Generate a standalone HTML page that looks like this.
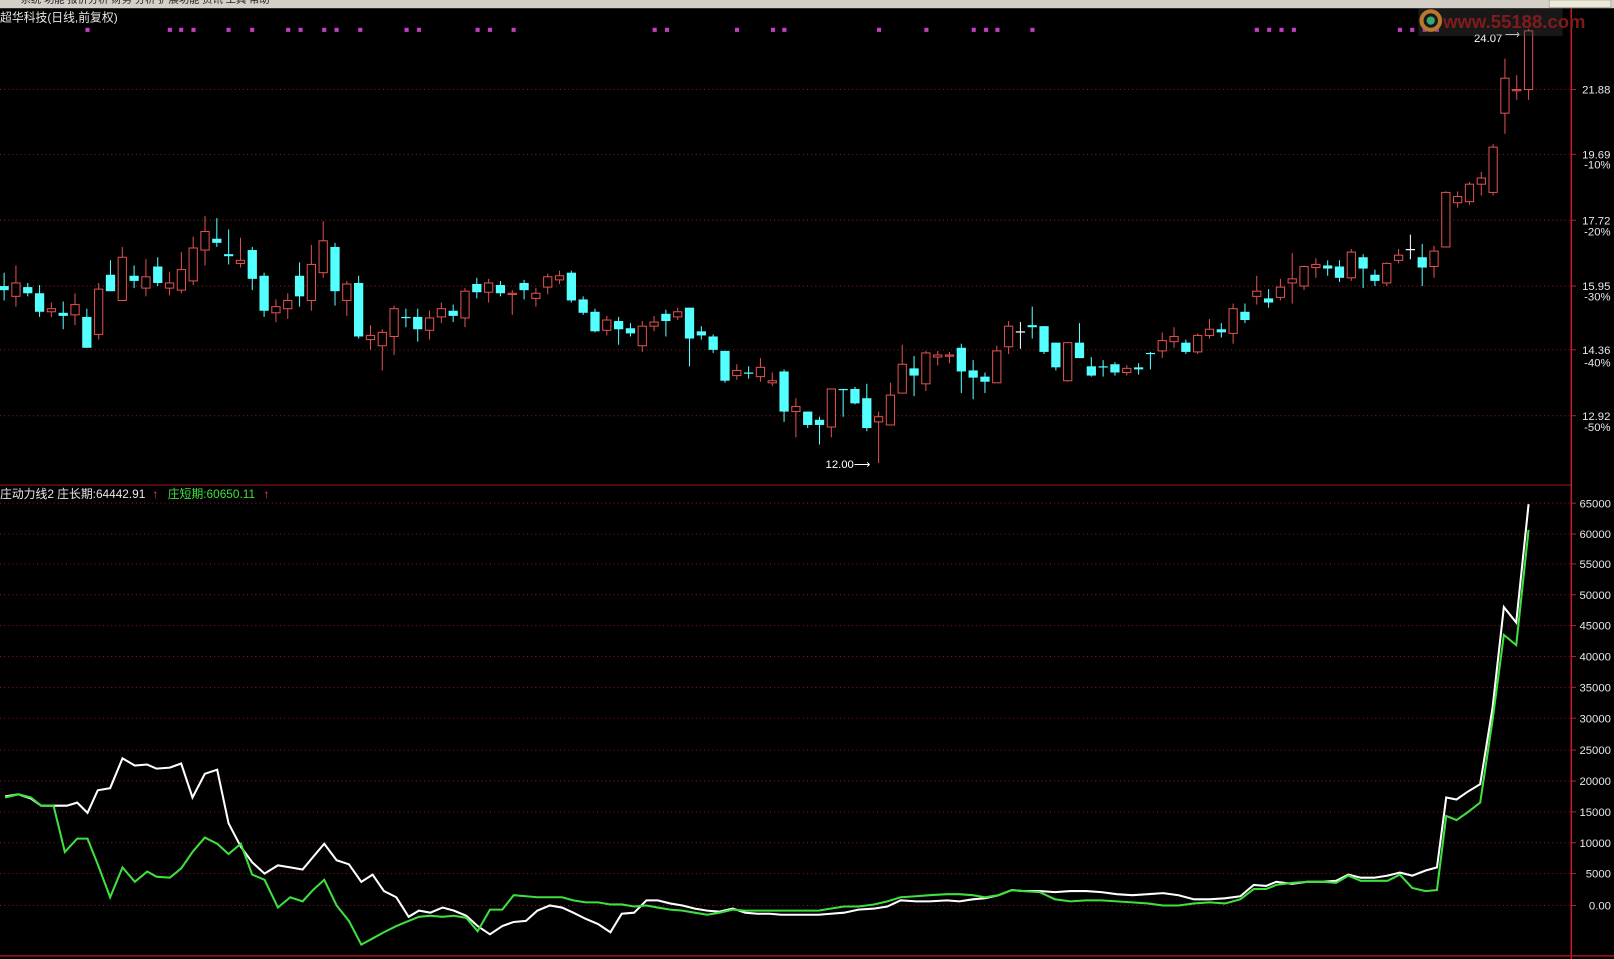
<!DOCTYPE html>
<html><head><meta charset="utf-8"><style>
html,body{margin:0;padding:0;background:#000;overflow:hidden}
svg{display:block}
text{font-family:"Liberation Sans","Noto Sans CJK SC",sans-serif}
</style></head><body>
<svg id="s" width="1614" height="959" viewBox="0 0 1568 932" preserveAspectRatio="none" xmlns="http://www.w3.org/2000/svg">
<rect x="0" y="0" width="1568" height="932" fill="#000"/>
<rect x="0" y="0" width="1568" height="8" fill="#d4d0c8"/>
<text x="20" y="3" font-size="10" fill="#222">系统 功能 报价分析 财务 分析 扩展功能 资讯 工具 帮助</text>
<rect x="1505" y="0" width="60" height="7" fill="#ece9d8" stroke="#888" stroke-width="0.5"/>
<g id="grid"></g>
<line x1="0" y1="471.5" x2="1526" y2="471.5" stroke="#a01818" stroke-width="1"/>
<line x1="1526.5" y1="8" x2="1526.5" y2="932" stroke="#c02020" stroke-width="1.5"/>
<line x1="0" y1="929" x2="1568" y2="929" stroke="#a01818" stroke-width="1.5"/>
<g id="c"></g>
<g id="lines"></g>
<text x="0" y="21" font-size="11.5" fill="#e8e8e8">超华科技(日线,前复权)</text>
<text x="0" y="484" font-size="11.5" fill="#e8e8e8">庄动力线2 庄长期:64442.91</text>
<text x="148" y="484" font-size="11.5" fill="#ff4040">↑</text>
<text x="163" y="484" font-size="11.5" fill="#3ee03e">庄短期:60650.11</text>
<text x="256" y="484" font-size="11.5" fill="#ff4040">↑</text>
<text x="1432" y="41" font-size="11" fill="#fff">24.07</text>
<text x="1462" y="37" font-size="10" fill="#fff">⟶</text>
<text x="802" y="455" font-size="11" fill="#fff">12.00⟶</text>
<rect x="1378" y="8" width="140" height="27" fill="#444" opacity="0.35"/>
<circle cx="1390" cy="20" r="9" fill="none" stroke="#b87830" stroke-width="4"/>
<circle cx="1390" cy="20" r="4" fill="#3a7"/>
<text x="1402" y="27" font-size="18" font-weight="bold" fill="#8e1c1c" opacity="0.9">www.55188.com</text>
<g id="ax" font-size="11" fill="#e8e8e8"></g>
</svg>
<script>
var NS="http://www.w3.org/2000/svg";
function el(p,t,a){var e=document.createElementNS(NS,t);for(var k in a)e.setAttribute(k,a[k]);p.appendChild(e);return e;}
var g=document.getElementById('grid'),ax=document.getElementById('ax');
[87,150,214,278,340,404].forEach(function(y){el(g,'line',{x1:0,y1:y,x2:1526,y2:y,stroke:'#8a1c1c','stroke-dasharray':'1 3','stroke-width':1});el(ax,'line',{x1:1526,y1:y,x2:1531,y2:y,stroke:'#c02020'});});
var pl=[["21.88",87],["19.69",150],["17.72",214],["15.95",278],["14.36",340],["12.92",404]];
pl.forEach(function(p){var t=el(ax,'text',{x:1537,y:p[1]+4});t.textContent=p[0];});
[["-10%",160],["-20%",225],["-30%",288],["-40%",352],["-50%",415]].forEach(function(p){var t=el(ax,'text',{x:1539,y:p[1]+4});t.textContent=p[0];});
var il=[["65000",489],["60000",519],["55000",548],["50000",578],["45000",608],["40000",638],["35000",668],["30000",698],["25000",729],["20000",759],["15000",789],["10000",819],["5000",849],["0.00",880]];
il.forEach(function(p){el(g,'line',{x1:0,y1:p[1],x2:1526,y2:p[1],stroke:'#8a1c1c','stroke-dasharray':'1 3','stroke-width':1});el(ax,'line',{x1:1526,y1:p[1],x2:1531,y2:p[1],stroke:'#c02020'});var t=el(ax,'text',{x:1565,y:p[1]+4,'text-anchor':'end'});t.textContent=p[0];});
[85,165,176,188,222,245,280,292,315,327,350,395,407,464,476,499,636,648,716,751,762,854,900,946,958,969,1003,1221,1233,1245,1257,1360,1372,1384,1396].forEach(function(x){el(g,'rect',{x:x-2,y:27,width:4,height:4,fill:'#c040c0'});});
var C=[
['d',278,282,265,292],['u',275,288,258,298],['d',279,285,275,288],['d',285,303,277,308],['u',300,303,294,308],['d',304,307,293,320],['u',296,306,285,316],['d',308,338,300,338],['u',281,325,275,330],['d',267,283,253,283],['u',250,292,240,292],['d',268,273,258,280],['u',269,280,252,288],['d',259,275,250,278],['u',275,280,264,287],['u',262,282,245,285],['u',241,273,230,277],['u',225,243,210,258],['d',232,236,212,240],['d',247,249,223,257],['u',253,256,231,260],['d',243,271,240,282],['d',268,302,265,308],['u',298,304,291,313],['u',292,300,285,310],['d',268,288,255,298],['u',257,292,238,302],['u',234,265,215,270],['d',240,283,236,297],['u',276,292,273,307],['d',275,327,268,329],['u',326,330,316,340],['u',323,336,320,360],['u',300,327,297,345],
['d',308,309,300,318],['d',308,320,300,332],['u',309,321,302,330],['u',300,308,294,314],['d',302,307,296,313],['u',283,309,280,318],['d',276,284,270,290],['u',275,284,271,294],['d',277,285,273,288],['u',285,286,282,306],['d',275,282,272,291],['u',285,290,280,298],['u',269,279,266,286],['u',268,272,263,276],['d',265,292,263,294],['d',291,304,288,306],['d',303,322,300,323],['u',311,321,307,326],['d',312,320,308,335],['d',319,324,314,327],['u',317,336,312,342],['u',313,317,307,322],['d',305,312,301,327],['u',303,308,299,311],['d',299,329,299,356],['d',322,326,317,330],['d',327,340,325,343],['d',341,370,341,372],['u',360,365,354,369],['d',362,363,356,368],['u',357,366,348,371],['u',370,372,362,375],['d',361,400,359,410],
['u',395,400,387,425],['d',400,413,400,416],['d',408,413,405,432],['u',378,415,378,425],['d',378,379,378,405],['d',378,392,376,393],['d',387,416,373,419],['u',405,410,400,450],['u',384,413,372,413],['u',354,382,335,382],['d',358,365,346,385],['u',343,373,341,380],['u',345,347,341,355],['u',345,346,342,353],['d',338,361,334,382],['d',360,367,350,388],['d',366,371,362,382],['u',341,372,336,372],['u',317,337,312,344],['w',322,323,313,339],['d',316,318,298,329],['d',317,342,317,344],['d',333,357,333,360],['u',333,370,333,371],['d',333,348,314,348],['d',356,365,347,366],['d',356,357,350,366],['d',354,362,352,365],['u',358,362,355,365],['d',357,359,353,364],['d',343,344,342,359],['u',331,341,323,348],['u',327,332,318,338],
['d',333,342,330,344],['u',326,342,324,344],['u',320,326,310,329],['d',320,323,314,328],['u',300,324,295,334],['d',303,311,295,314],['u',283,288,268,296],['d',290,294,281,299],['u',279,289,271,292],['u',271,275,246,295],['u',259,278,258,282],['u',257,260,251,270],['d',258,261,253,268],['d',259,270,253,274],['u',245,270,242,273],['d',250,261,247,280],['d',267,273,262,278],['u',256,275,255,278],['u',248,253,242,256],['w',242,243,228,252],['d',250,260,237,278],['u',244,259,239,270],['u',187,240,186,240],['u',191,197,186,202],['u',179,196,177,199],['u',173,179,167,190],['u',143,187,140,190],['u',76,110,57,130],['u',87,88,73,97],['u',30,87,28,97]];
var cg=document.getElementById('c');var n=C.length;
for(var i=0;i<n;i++){var c=C[i];var x=4+i*(1481/(n-1));var col=c[0]=='u'?'#e05050':(c[0]=='w'?'#ffffff':'#54ffff');
el(cg,'line',{x1:x,y1:c[3],x2:x,y2:c[4],stroke:col,'stroke-width':1});
var h=Math.max(c[2]-c[1],1.2);
if(c[0]=='u')el(cg,'rect',{x:x-4,y:c[1],width:8,height:h,fill:'#000',stroke:col,'stroke-width':1});
else el(cg,'rect',{x:x-4.5,y:c[1],width:9,height:h,fill:col});}
var W=[[5,774],[18,772],[30,776],[40,783],[52,783],[65,783],[75,780],[85,790],[95,768],[107,766],[119,737],[131,744],[143,743],[152,747],[165,746],[176,742],[187,775],[199,752],[211,748],[222,800],[234,823],[245,838],[257,849],[270,841],[282,843],[294,845],[304,833],[315,820],[327,836],[339,840],[351,857],[362,850],[373,866],[385,872],[397,891],[407,885],[418,887],[430,882],[441,885],[453,890],[464,900],[476,908],[488,900],[499,896],[511,895],[522,885],[534,880],[546,882],[557,887],[569,893],[581,898],[593,906],[604,888],[616,887],[628,875],[639,875],[651,878],[663,880],[675,883],[687,885],[699,886],[712,883],[724,887],[736,888],[748,888],[759,889],[771,889],[783,889],[795,889],[807,888],[820,887],[834,884],[849,883],[862,881],[875,875],[890,876],[903,876],[920,875],[932,876],[945,874],[957,873],[970,870],[983,865],[995,866],[1010,866],[1025,867],[1040,866],[1055,866],[1070,867],[1085,869],[1100,870],[1115,869],[1130,868],[1145,870],[1160,874],[1175,874],[1190,873],[1205,871],[1218,860],[1230,861],[1240,857],[1255,859],[1270,857],[1285,857],[1298,856],[1310,850],[1322,853],[1335,853],[1348,851],[1360,848],[1372,851],[1385,846],[1396,843],[1405,775],[1415,777],[1425,770],[1438,762],[1450,688],[1461,590],[1473,605],[1485,490]];
var G=[[5,775],[18,772],[30,775],[40,783],[52,783],[63,828],[75,815],[85,815],[95,840],[107,872],[119,843],[131,857],[143,847],[152,852],[165,853],[176,844],[187,828],[199,814],[211,820],[222,830],[234,820],[245,850],[257,855],[270,882],[282,872],[294,876],[304,865],[315,855],[327,880],[339,895],[351,918],[362,912],[373,906],[385,900],[397,895],[407,891],[418,890],[430,891],[441,890],[453,892],[464,905],[476,884],[488,884],[499,870],[511,871],[522,872],[534,872],[546,872],[557,875],[569,877],[581,877],[593,879],[604,879],[616,881],[628,880],[639,882],[651,884],[663,885],[675,887],[687,889],[699,887],[712,884],[724,885],[736,885],[748,885],[759,885],[771,885],[783,885],[795,885],[807,883],[820,881],[834,881],[849,879],[862,876],[875,872],[890,871],[903,870],[920,869],[932,869],[945,870],[957,872],[970,870],[983,865],[995,866],[1010,867],[1025,874],[1040,876],[1055,875],[1070,875],[1085,876],[1100,877],[1115,878],[1130,880],[1145,880],[1160,878],[1175,877],[1190,878],[1205,874],[1218,864],[1230,864],[1240,860],[1255,858],[1270,857],[1285,857],[1298,858],[1310,851],[1322,856],[1335,856],[1348,856],[1360,850],[1372,863],[1385,866],[1396,865],[1405,793],[1415,797],[1425,790],[1438,780],[1450,700],[1461,617],[1473,627],[1485,515]];
var lg=document.getElementById('lines');
el(lg,'polyline',{points:W.join(' '),fill:'none',stroke:'#ffffff','stroke-width':2});
el(lg,'polyline',{points:G.join(' '),fill:'none',stroke:'#3ee03e','stroke-width':2});
</script>
</body></html>
